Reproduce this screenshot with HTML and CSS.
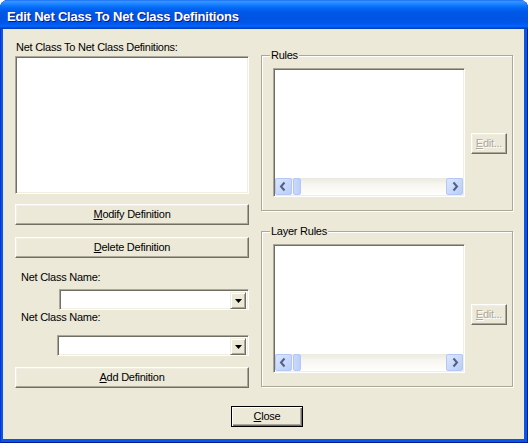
FILE: index.html
```html
<!DOCTYPE html>
<html lang="en">

<head>
  <meta charset="UTF-8">
  <title>Edit Net Class To Net Class Definitions</title>
  <link rel="stylesheet" href="styles.css">
</head>

<body>
  <div class="window">
    <div class="titlebar">Edit Net Class To Net Class Definitions</div>

    <div class="client">
      <div class="panes">
        <!-- left side: definitions list and the two class pickers -->
        <div class="left">
          <div class="label">Net Class To Net Class Definitions:</div>
          <div class="listbox defs"></div>
          <button class="btn modify"><u>M</u>odify Definition</button>
          <button class="btn delete"><u>D</u>elete Definition</button>

          <div class="label indent name1">Net Class Name:</div>
          <div class="combo combo1">
            <div class="combo-btn">
              <svg width="7" height="4" viewBox="0 0 7 4"><polygon points="0,0 7,0 3.5,4" fill="#000"/></svg>
            </div>
          </div>

          <div class="label indent name2">Net Class Name:</div>
          <div class="combo combo2">
            <div class="combo-btn">
              <svg width="7" height="4" viewBox="0 0 7 4"><polygon points="0,0 7,0 3.5,4" fill="#000"/></svg>
            </div>
          </div>

          <button class="btn add"><u>A</u>dd Definition</button>
        </div>

        <!-- right side: rule groups -->
        <div class="right">
          <fieldset class="group rules">
            <legend>Rules</legend>
            <div class="group-body">
              <div class="listbox rule-list">
                <div class="hscroll">
                  <div class="sb-btn">
                    <svg width="15" height="15" viewBox="0 0 15 15"><polyline points="8.5,3.5 5,7.5 8.5,11.5" fill="none" stroke="#4D6185" stroke-width="2"/></svg>
                  </div>
                  <div class="sb-thumb"></div>
                  <div class="sb-track"></div>
                  <div class="sb-btn">
                    <svg width="15" height="15" viewBox="0 0 15 15"><polyline points="6.5,3.5 10,7.5 6.5,11.5" fill="none" stroke="#4D6185" stroke-width="2"/></svg>
                  </div>
                </div>
              </div>
              <button class="btn edit" disabled><u>E</u>dit...</button>
            </div>
          </fieldset>

          <fieldset class="group layer">
            <legend>Layer Rules</legend>
            <div class="group-body">
              <div class="listbox rule-list">
                <div class="hscroll">
                  <div class="sb-btn">
                    <svg width="15" height="15" viewBox="0 0 15 15"><polyline points="8.5,3.5 5,7.5 8.5,11.5" fill="none" stroke="#4D6185" stroke-width="2"/></svg>
                  </div>
                  <div class="sb-thumb"></div>
                  <div class="sb-track"></div>
                  <div class="sb-btn">
                    <svg width="15" height="15" viewBox="0 0 15 15"><polyline points="6.5,3.5 10,7.5 6.5,11.5" fill="none" stroke="#4D6185" stroke-width="2"/></svg>
                  </div>
                </div>
              </div>
              <button class="btn edit" disabled><u>E</u>dit...</button>
            </div>
          </fieldset>
        </div>
      </div>

      <div class="footer">
        <button class="btn close"><u>C</u>lose</button>
      </div>
    </div>
  </div>
</body>

</html>
```

FILE: styles.css
```css
html {
  font-family: "Liberation Sans", Arial, sans-serif;
}

body {
  margin: 0;
  background-color: #fff;
}

.window {
  width: 528px;
  height: 443px;
  display: flex;
  flex-direction: column;
  background-color: #0856E4;
  border-radius: 8px 8px 0 0;
  overflow: hidden;
  box-shadow: inset 1px 0 #0831D9, inset -1px -1px #001A93;
}

.titlebar {
  height: 29px;
  flex: none;
  box-sizing: border-box;
  padding: 4px 0 0 7px;
  background: linear-gradient(to bottom, #0A5FF0 0px, #3D95FF 1px, #2A8CFF 3px, #127DFF 5px, #0468F5 8px, #0058E8 12px, #0054E3 18px, #0056EA 23px, #005DF5 25px, #0266FD 26px, #0059EC 27px, #0046C8 28px, #003DB5 29px);
  color: #fff;
  font-size: 13px;
  font-weight: bold;
  line-height: 25px;
  letter-spacing: -0.2px;
  text-shadow: 1px 1px #0A1883;
  white-space: nowrap;
}

.client {
  flex: 1;
  margin: 0 4px 4px 3px;
  padding: 12px 11px 0 12px;
  background-color: #ECE9D8;
  color: #000;
  font-size: 11px;
  line-height: 13px;
  letter-spacing: -0.25px;
  display: flex;
  flex-direction: column;
}

.panes {
  display: flex;
  gap: 12px;
}

.left {
  width: 234px;
  display: flex;
  flex-direction: column;
}

.label {
  height: 13px;
  padding-left: 1px;
  white-space: nowrap;
}

.label.indent {
  padding-left: 6px;
}

.listbox {
  box-sizing: border-box;
  background-color: #fff;
  border: 1px solid;
  border-color: #ACA899 #fff #fff #ACA899;
  box-shadow: inset 1px 1px #716F64, inset -1px -1px #F1EFE2;
}

.defs {
  height: 138px;
  margin-top: 2px;
}

.btn {
  box-sizing: border-box;
  height: 21px;
  padding: 0;
  font: inherit;
  letter-spacing: inherit;
  color: #000;
  background-color: #ECE9D8;
  border: 1px solid;
  border-color: #fff #716F64 #716F64 #fff;
  box-shadow: inset -1px -1px #ACA899, inset 1px 1px #F1EFE2;
}

.modify {
  margin-top: 10px;
}

.delete {
  margin-top: 12px;
}

.name1 {
  margin-top: 13px;
}

.name2 {
  margin-top: 1px;
}

.add {
  margin-top: 11px;
}

.combo {
  box-sizing: border-box;
  height: 21px;
  padding: 2px;
  display: flex;
  justify-content: flex-end;
  background-color: #fff;
  border: 1px solid;
  border-color: #ACA899 #fff #fff #ACA899;
  box-shadow: inset 1px 1px #716F64, inset -1px -1px #F1EFE2;
}

.combo1 {
  margin: 5px 0 0 44px;
}

.combo2 {
  margin: 11px 0 0 42px;
}

.combo-btn {
  width: 16px;
  height: 17px;
  box-sizing: border-box;
  display: flex;
  align-items: center;
  justify-content: center;
  background-color: #ECE9D8;
  border: 1px solid;
  border-color: #F1EFE2 #716F64 #716F64 #F1EFE2;
  box-shadow: inset 1px 1px #fff, inset -1px -1px #ACA899;
}

.right {
  width: 252px;
  padding-top: 8px;
  display: flex;
  flex-direction: column;
}

.group {
  margin: 0;
  padding: 0;
  min-width: 0;
  border: 1px solid #ACA899;
  box-shadow: inset 1px 1px #fff, 1px 1px #fff;
}

.group legend {
  margin-left: 8px;
  padding: 0 1px;
  line-height: 13px;
  background-color: #ECE9D8;
}

.layer {
  margin-top: 14px;
}

.group-body {
  display: flex;
  align-items: flex-start;
  gap: 6px;
  padding: 6px 5px 13px 11px;
}

.rule-list {
  width: 192px;
  height: 129px;
  padding: 1px;
  display: flex;
  flex-direction: column;
  justify-content: flex-end;
}

.hscroll {
  height: 17px;
  display: flex;
  background: linear-gradient(to bottom, #EBEADF, #F7F6F1 40%, #FEFEFB);
}

.sb-btn {
  width: 17px;
  height: 17px;
  box-sizing: border-box;
  display: flex;
  align-items: center;
  justify-content: center;
  border: 1px solid #B4C8F6;
  border-radius: 2px;
  background: linear-gradient(135deg, #DCE6FE, #BACDF8);
}

.sb-thumb {
  width: 8px;
  margin-left: 1px;
  box-sizing: border-box;
  border: 1px solid #B4C8F6;
  border-radius: 2px;
  background: linear-gradient(to right, #CAD8FC, #BCCEF8);
}

.sb-track {
  flex: 1;
}

.edit {
  width: 36px;
  margin-top: 65px;
  color: #ACA899;
  text-shadow: 1px 1px #fff;
}

.layer .edit {
  margin-top: 60px;
}

.footer {
  margin-top: 18px;
  padding-left: 216px;
}

.close {
  width: 72px;
  border-color: #000;
  box-shadow: inset 1px 1px #fff, inset -1px -1px #716F64, inset -2px -2px #ACA899;
}
```
